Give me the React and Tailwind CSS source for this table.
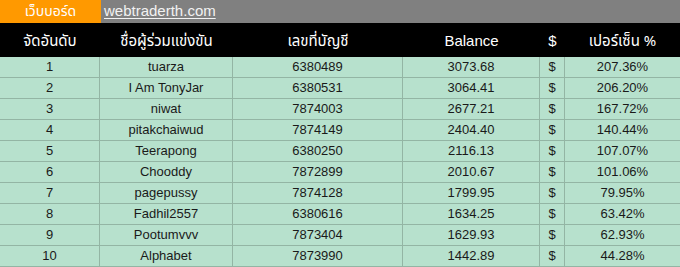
import React from "react";

const rows = [
  [1, "tuarza", "6380489", "3073.68", "207.36%"],
  [2, "I Am TonyJar", "6380531", "3064.41", "206.20%"],
  [3, "niwat", "7874003", "2677.21", "167.72%"],
  [4, "pitakchaiwud", "7874149", "2404.40", "140.44%"],
  [5, "Teerapong", "6380250", "2116.13", "107.07%"],
  [6, "Chooddy", "7872899", "2010.67", "101.06%"],
  [7, "pagepussy", "7874128", "1799.95", "79.95%"],
  [8, "Fadhil2557", "6380616", "1634.25", "63.42%"],
  [9, "Pootumvvv", "7873404", "1629.93", "62.93%"],
  [10, "Alphabet", "7873990", "1442.89", "44.28%"],
];

const cols = "grid grid-cols-[100px_133px_170px_137px_25px_115px]";
const thai = "font-['Noto_Sans_Thai','Noto_Sans_Thai_UI','Loma','Garuda','Norasi',sans-serif]";

export default function App() {
  return (
    <div className="w-[680px] h-[267px] overflow-hidden bg-[#b7e1cd] font-['Liberation_Sans','Noto_Sans',sans-serif]">
      {/* top bar */}
      <div className="flex h-[23px] bg-[#808080]">
        <div className={`w-[101px] bg-[#ff9900] flex items-center justify-center text-white text-[14px] whitespace-nowrap ${thai}`}>
          เว็บบอร์ด
        </div>
        <div className="pl-[3px] flex items-center text-[#f2f2f2] text-[15px] underline underline-offset-2">
          webtraderth.com
        </div>
      </div>

      {/* header */}
      <div className={`${cols} h-[34px] bg-black text-white text-[15px]`}>
        <div className={`flex items-end justify-center pb-[4px] whitespace-nowrap ${thai}`}>จัดอันดับ</div>
        <div className={`flex items-end justify-center pb-[4px] ${thai}`}>ชื่อผู้ร่วมแข่งขัน</div>
        <div className={`flex items-end justify-center pb-[4px] ${thai}`}>เลขที่บัญชี</div>
        <div className="flex items-end justify-center pb-[5px]">Balance</div>
        <div className="flex items-end justify-center pb-[5px]">$</div>
        <div className={`flex items-end justify-center pb-[4px] ${thai}`}>เปอร์เซ็น %</div>
      </div>

      {/* rows */}
      {rows.map((r) => (
        <div key={r[0]} className={`${cols} h-[21px] border-b border-[#93b5a4] text-[13px] text-[#1a1a1a]`}>
          <div className="flex items-center justify-center border-r border-[#93b5a4]">{r[0]}</div>
          <div className="flex items-center justify-center border-r border-[#93b5a4]">{r[1]}</div>
          <div className="flex items-center justify-center border-r border-[#93b5a4]">{r[2]}</div>
          <div className="flex items-center justify-center border-r border-[#93b5a4]">{r[3]}</div>
          <div className="flex items-center justify-center border-r border-[#93b5a4]">$</div>
          <div className="flex items-center justify-center">{r[4]}</div>
        </div>
      ))}
    </div>
  );
}
